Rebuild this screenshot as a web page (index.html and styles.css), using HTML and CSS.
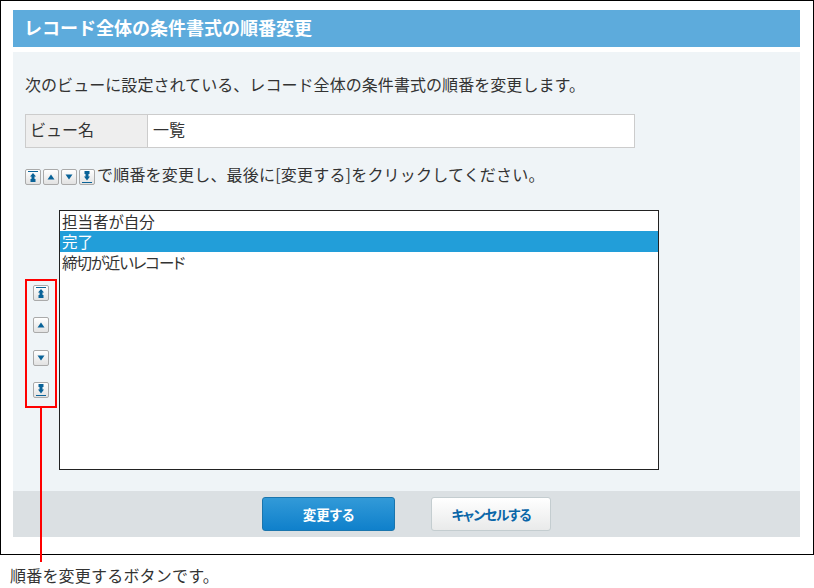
FILE: index.html
```html
<!DOCTYPE html>
<html lang="ja">
<head>
    <meta charset="UTF-8">
    <meta name="viewport" content="width=device-width, initial-scale=1.0">
    <title>レコード全体の条件書式の順番変更</title>
    <link rel="stylesheet" href="styles.css">
</head>
<body>
    <svg class="defs" width="0" height="0">
        <symbol id="ico-top" viewBox="0 0 14 14">
            <rect x="2" y="1" width="10" height="1" fill="#0a6398"/>
            <path d="M7 3 10 6.500H8.500V9H9.500v3H4.500V9h1V6.500H4z" fill="#0a6398"/>
        </symbol>
        <symbol id="ico-up" viewBox="0 0 14 14">
            <path d="M7 4.500 10.500 9.500H3.500z" fill="#0a6398"/>
        </symbol>
        <symbol id="ico-down" viewBox="0 0 14 14">
            <path d="M3.500 4.500H10.500L7 9.500z" fill="#0a6398"/>
        </symbol>
        <symbol id="ico-bottom" viewBox="0 0 14 14">
            <path d="M4.500 1h5v3h-1v2.500H10L7 10.500 4 6.500h1.500V4h-1z" fill="#0a6398"/>
            <rect x="2" y="12" width="10" height="1" fill="#0a6398"/>
        </symbol>
    </svg>

    <div class="frame">
        <h1 class="title">レコード全体の条件書式の順番変更</h1>

        <div class="panel">
            <p class="lead">次のビューに設定されている、レコード全体の条件書式の順番を変更します。</p>

            <table class="info">
                <tr>
                    <th>ビュー名</th>
                    <td>一覧</td>
                </tr>
            </table>

            <p class="hint">
                <span class="hint-icons">
                    <span class="order-btn"><svg><use href="#ico-top"/></svg></span>
                    <span class="order-btn"><svg><use href="#ico-up"/></svg></span>
                    <span class="order-btn"><svg><use href="#ico-down"/></svg></span>
                    <span class="order-btn"><svg><use href="#ico-bottom"/></svg></span>
                </span>
                で順番を変更し、最後に[変更する]をクリックしてください。
            </p>

            <div class="sorter">
                <div class="side-btns">
                    <span class="order-btn"><svg><use href="#ico-top"/></svg></span>
                    <span class="order-btn"><svg><use href="#ico-up"/></svg></span>
                    <span class="order-btn"><svg><use href="#ico-down"/></svg></span>
                    <span class="order-btn"><svg><use href="#ico-bottom"/></svg></span>
                    <!-- 注釈の赤枠と線 -->
                    <div class="callout-box"></div>
                    <div class="callout-line"></div>
                </div>
                <ul class="listbox">
                    <li>担当者が自分</li>
                    <li class="selected">完了</li>
                    <li class="tight">締切が近いレコード</li>
                </ul>
            </div>
        </div>

        <div class="footer">
            <button class="btn btn-primary">変更する</button>
            <button class="btn btn-cancel">キャンセルする</button>
        </div>
    </div>

    <p class="caption">順番を変更するボタンです。</p>
</body>
</html>
```

FILE: styles.css
```css
* {
    box-sizing: border-box;
}

body {
    margin: 0;
    background-color: #fff;
    color: #333;
    font-family: "Noto Sans CJK JP", "Noto Sans", sans-serif;
    font-size: 16px;
    overflow: hidden;
}

.defs {
    position: absolute;
}

/* 外枠 */
.frame {
    width: 814px;
    height: 555px;
    padding: 9px 13px 0 12px;
    border: 1px solid #000;
}

.title {
    height: 37px;
    margin: 0 0 5px;
    padding-left: 11px;
    background-color: #5dabdc;
    color: #fff;
    font-size: 18px;
    font-weight: bold;
    line-height: 35px;
}

.panel {
    height: 439px;
    padding: 20px 12px 0;
    background-color: #eff4f7;
}

.lead {
    height: 24px;
    margin: 0 0 18px;
    letter-spacing: 0.06px;
    line-height: 24px;
}

.info {
    width: 610px;
    height: 34px;
    margin-bottom: 15px;
    border-collapse: collapse;
    background-color: #fff;
}

.info th,
.info td {
    padding: 0 5px 5px;
    border: 1px solid #ccc;
    font-weight: normal;
    text-align: left;
}

.info th {
    width: 122px;
    padding-left: 4px;
    background-color: #eee;
}

.hint {
    display: flex;
    align-items: flex-start;
    height: 24px;
    margin: 0 0 23px;
    letter-spacing: 0.2px;
    line-height: 22px;
    white-space: nowrap;
}

.hint-icons {
    display: flex;
    gap: 2px;
    margin-top: 6px;
    margin-right: 2px;
}

.order-btn {
    display: block;
    width: 16px;
    height: 16px;
    border: 1px solid #aaa;
    border-radius: 2px;
    background: linear-gradient(#fff, #e2e2e2);
}

.order-btn svg {
    display: block;
    width: 14px;
    height: 14px;
}

.sorter {
    display: flex;
}

.side-btns {
    position: relative;
    display: flex;
    flex-direction: column;
    gap: 16.300px;
    width: 34px;
    padding-top: 75px;
    padding-left: 8px;
}

/* 赤枠は順番ボタンの上に重ねる */
.callout-box {
    position: absolute;
    top: 69px;
    left: 0;
    width: 32px;
    height: 129px;
    border: 2px solid #ff0000;
}

.callout-line {
    position: absolute;
    top: 198px;
    left: 15px;
    width: 2px;
    height: 154px;
    background-color: #ff0000;
}

.listbox {
    width: 600px;
    height: 260px;
    margin: 0;
    padding: 0;
    border: 1px solid #222;
    background-color: #fff;
    list-style: none;
}

.listbox li {
    height: 20.400px;
    padding-left: 2px;
    font-size: 15.500px;
    font-feature-settings: "palt";
    line-height: 20px;
}

.listbox .selected {
    background-color: #229ed9;
    color: #fff;
}

.listbox .tight {
    letter-spacing: -1.100px;
}

.footer {
    display: flex;
    justify-content: center;
    gap: 36px;
    height: 46px;
    padding-top: 6px;
    background-color: #dbe0e3;
}

.btn {
    height: 34px;
    padding: 0;
    border-radius: 3px;
    font-family: inherit;
    font-size: 13.500px;
    font-weight: bold;
    font-feature-settings: "palt";
}

.btn-primary {
    width: 133px;
    border: 1px solid #1a75ad;
    background: linear-gradient(#329ad8, #0f80cb);
    color: #fff;
}

.btn-cancel {
    width: 120px;
    border: 1px solid #c4cdd0;
    background: linear-gradient(#fff, #e9eaea);
    color: #0a66a8;
    letter-spacing: -1.100px;
}

.caption {
    margin: 9px 0 0 10px;
    letter-spacing: 0.2px;
    line-height: 22px;
}
```
